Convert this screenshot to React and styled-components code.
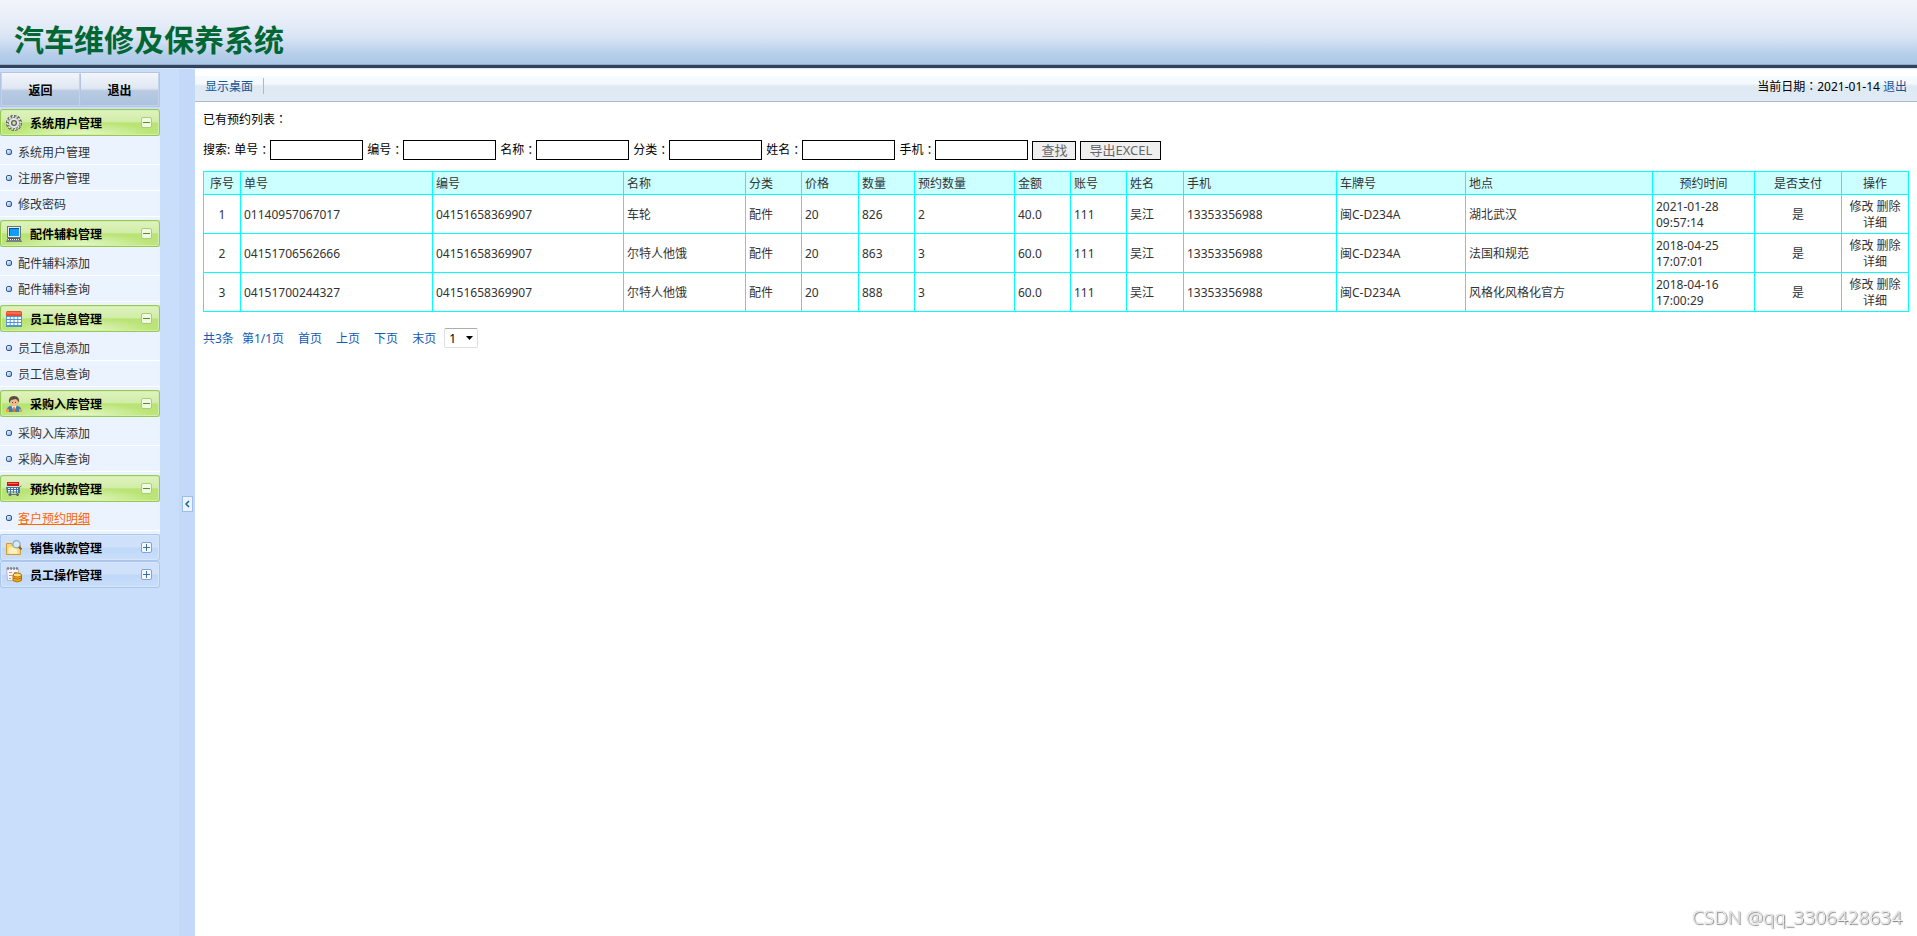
import React, { useState } from 'react';
import styled, { createGlobalStyle } from 'styled-components';

const GlobalStyle = createGlobalStyle`
  * {
    box-sizing: border-box;
  }

  body {
    margin: 0;
    background: #fff;
    color: #000;
    font: 12px/16px 'Noto Sans', 'Noto Sans CJK SC', sans-serif;
  }

  a {
    color: inherit;
    text-decoration: none;
  }
`;

const Page = styled.div`
  display: flex;
  flex-direction: column;
  min-height: 100vh;
`;

const Header = styled.header`
  height: 68px;
  padding: 16px 14px 0;
  background: linear-gradient(#f2f5fa 0%, #e4ebf7 40%, #d6e2f3 60%, #b4cdea 85%, #abc8e8 100%);
  border-bottom: 3px solid #30435f;
  box-shadow: inset 0 -1px 0 #98abc4;
`;

const Title = styled.h1`
  margin: 0;
  color: #006633;
  font: bold 30px/44px 'Noto Sans CJK SC', sans-serif;
`;

const Body = styled.div`
  flex: 1;
  display: flex;
  border-top: 1px solid #d8e6f8;
`;

const Sidebar = styled.nav`
  width: 179px;
  padding-top: 3px;
  padding-right: 19px;
  background: #c9defa;
`;

const TopButtons = styled.div`
  display: grid;
  grid-template-columns: 1fr 1fr;
  height: 35px;
  margin-bottom: 2px;
  border: 1px solid #b4c5e3;
`;

const TopButton = styled.button`
  padding: 2px 0 0;
  border: 1px solid #c3d2e9;
  border-top-color: #f3f6fb;
  background: linear-gradient(#f1f4fa 0%, #dfe7f2 46%, #b9cbe3 54%, #adc2df 100%);
  color: #000;
  font: inherit;
  font-weight: bold;

  & + & {
    border-left-color: #b4c5e3;
  }
`;

const GroupHeader = styled.button`
  display: flex;
  align-items: center;
  gap: 8px;
  width: 100%;
  height: 27px;
  padding: 0 7px 0 5px;
  border: 1px solid ${props => (props.$open ? '#96cb50' : '#abc7ec')};
  border-radius: 3px;
  background: ${props => (props.$open
    ? 'radial-gradient(ellipse 45% 55% at 50% 100%, #e6f8cc 0%, rgba(230, 248, 204, 0) 100%), linear-gradient(#dff2bf 0%, #d2eda8 46%, #b9e373 52%, #bde67c 100%)'
    : 'linear-gradient(#cfe1fa 0%, #d0e2fb 48%, #bfd8f8 52%, #c9defb 100%)')};
  color: #000;
  font: inherit;
  font-weight: bold;
  text-align: left;
  box-shadow: inset 0 0 0 1px ${props => (props.$open ? '#d2eeaa' : '#d7e6fb')};

  svg {
    flex-shrink: 0;
  }
`;

const GroupTitle = styled.span`
  flex: 1;
  padding-top: 2px;
`;

const Items = styled.ul`
  margin: 0;
  padding: 3px 0;
  list-style: none;
  background: #eaf3ff;
`;

const Item = styled.li`
  display: flex;
  align-items: center;
  gap: 6px;
  height: 26px;
  padding-left: 6px;
  border-bottom: 1px solid #fff;
  color: ${props => (props.$active ? '#ff6600' : '#333')};

  a {
    padding-top: 2px;
    text-decoration: ${props => (props.$active ? 'underline' : 'none')};
  }
`;

const Bullet = styled.span`
  width: 6px;
  height: 6px;
  border: 1px solid #39588a;
  border-radius: 2px;
  background: linear-gradient(135deg, #fff, #6fa8ea);
`;

const Splitter = styled.div`
  width: 16px;
  display: flex;
  align-items: center;
  justify-content: center;
  padding-top: 2px;
  background: #c3d9f9;
`;

const Collapse = styled.button`
  display: flex;
  align-items: center;
  justify-content: center;
  width: 11px;
  height: 16px;
  padding: 0;
  border: 1px solid #9fbfe8;
  background: #eaf3ff;
`;

const Main = styled.main`
  flex: 1;
  min-width: 0;
`;

const TopBar = styled.div`
  display: flex;
  align-items: center;
  justify-content: space-between;
  height: 33px;
  padding: 2px 10px 0;
  background: linear-gradient(#fff 0 7px, #f5fbff 7px, #f3f9fe 15px, #e6edf4 16px, #dfe9f4 18px, #e1ebf5 100%);
  border-bottom: 1px solid #a9bac8;
`;

const DesktopLink = styled.a`
  padding: 2px 10px 0 0;
  border-right: 1px solid #a9bac8;
  color: #15559a;
  line-height: 14px;
`;

const LogoutLink = styled.a`
  color: #15559a;
`;

const Content = styled.div`
  padding: 9px 8px 8px;
`;

const Caption = styled.p`
  margin: 0;
`;

const Search = styled.form`
  display: flex;
  align-items: center;
  flex-wrap: wrap;
  gap: 4px;
  margin: 12px 0 11px;
`;

const Field = styled.label`
  display: flex;
  align-items: center;
`;

const TextBox = styled.input`
  width: 93px;
  height: 20px;
  padding: 1px 2px;
  border: 1px solid #000;
  background: #fff;
  font: inherit;
`;

const Button = styled.button`
  height: 19px;
  padding: 0 8px;
  border: 1px solid #000;
  background: #efefef;
  color: #666;
  font: inherit;
  font-size: 13px;
  line-height: 17px;
`;

// full-width colon with its dots in the middle of the em box
const ColonMark = styled.span`
  font-family: 'Noto Sans CJK TC', sans-serif;
`;

const Table = styled.table`
  width: 100%;
  table-layout: fixed;
  border-collapse: collapse;
  color: #333;

  th,
  td {
    border: 1px solid #00ffff;
    padding: 4px 3px 2px;
    font-weight: normal;
  }
`;

const Col = styled.col`
  width: ${props => props.$w}px;
`;

const HeadRow = styled.tr`
  background: #ccffff;
`;

const Th = styled.th`
  text-align: ${props => (props.$center ? 'center' : 'left')};
`;

const Td = styled.td`
  height: 39px;
  text-align: ${props => (props.$center ? 'center' : 'left')};
`;

const Pager = styled.div`
  display: flex;
  align-items: center;
  gap: 14px;
  margin-top: 16px;
  color: #1459b3;

  a,
  span {
    padding-top: 2px;
  }
`;

const PagerGroup = styled.div`
  display: flex;
  align-items: center;
  gap: 8px;
`;

const PageSelect = styled.div`
  display: grid;
  align-items: center;
  width: 34px;
  height: 20px;

  select,
  svg {
    grid-area: 1 / 1;
  }

  select {
    height: 20px;
    padding: 1px 4px 0;
    appearance: none;
    border: 1px solid #dcdfe6;
    border-top-color: #abadb3;
    border-radius: 2px;
    background: #fff;
    color: #000;
    font: inherit;
  }

  svg {
    justify-self: end;
    margin-right: 5px;
    pointer-events: none;
  }
`;

const Watermark = styled.div`
  position: fixed;
  right: 15px;
  bottom: 8px;
  color: #f4f4f4;
  font: 300 19px/22px 'Open Sans', 'Noto Sans', sans-serif;
  text-shadow: 1px 1px 1px #777, 0 0 1px #888;
`;

const Colon = () => <ColonMark>：</ColonMark>;

const GearIcon = () => (
  <svg width="16" height="16" viewBox="0 0 16 16">
    <circle cx="8" cy="8" r="6.9" fill="none" stroke="#5c5c60" strokeWidth="2.2" strokeDasharray="2.4 1.2" />
    <circle cx="8" cy="8" r="5.6" fill="#e6e6e8" stroke="#6c6c70" />
    <circle cx="8" cy="8" r="6.2" fill="none" stroke="#ededf0" strokeWidth="1.6" strokeDasharray="1.4 1.85" strokeDashoffset="-.5" />
    <circle cx="8" cy="8" r="2.4" fill="#cbe89c" stroke="#5f5f64" strokeWidth="1.3" />
  </svg>
);

const ComputerIcon = () => (
  <svg width="16" height="16" viewBox="0 0 16 16">
    <rect x="1.5" y=".5" width="13" height="11" fill="#e8ecee" stroke="#66757e" />
    <rect x="3" y="2" width="10" height="8" fill="#119cf5" />
    <path d="M3 2h10v1H3zM3 2h1v8H3z" fill="#0751a2" />
    <path d="M2 12h12l2 4H0z" fill="#4e5d66" />
    <path d="M2 13.5h12M1.5 15h13" stroke="#f1f3f4" strokeDasharray="1 1" />
  </svg>
);

const CalendarIcon = () => (
  <svg width="16" height="16" viewBox="0 0 17 16" preserveAspectRatio="none">
    <path d="M0 5h17v11H0z" fill="#4f94d4" />
    <path d="M0 1.5Q0 0 1.5 0h14Q17 0 17 1.5V5H0z" fill="#ed4a32" />
    <path d="M1 2h15" stroke="#ff8f78" />
    {[6, 9, 12].map(y => (
      <path key={y} d={`M1 ${y + 1}h3M5 ${y + 1}h3M9 ${y + 1}h3M13 ${y + 1}h3`} stroke="#fff" strokeWidth="2" />
    ))}
  </svg>
);

const PersonIcon = () => (
  <svg width="16" height="16" viewBox="0 0 16 16">
    <path d="M1 16v-3q0-2 3-3l4-1 4 1q3 1 3 3v3z" fill="#3d7fb3" />
    <path d="M5.5 10h5L8 16z" fill="#f3f6f8" />
    <path d="M7.3 11h1.4l.8 5h-3z" fill="#e8742a" />
    <ellipse cx="8" cy="6" rx="4" ry="4.5" fill="#f0b98a" />
    <path d="M3 7Q2 0 8 0t5 7l-1-2-2-2-5 1-1 2z" fill="#5c4a3c" />
    <circle cx="6.5" cy="6.5" r=".6" fill="#333" />
    <circle cx="9.5" cy="6.5" r=".6" fill="#333" />
    <path d="M0 13h3v3H0zM13 13h3v3h-3z" fill="#ef9b4f" />
  </svg>
);

const CartIcon = () => (
  <svg width="16" height="16" viewBox="0 0 16 16">
    <rect x="1" y="1" width="12" height="4" fill="#d40f18" />
    <path d="M2 2.500h10" stroke="#f26a6a" />
    <path d="M0 6h14l-1 6H1z" fill="#3e74ab" />
    <path d="M2 7.500h10M2 9.500h10M2 11h10" stroke="#fff" strokeDasharray="2 1" />
    <path d="M13.500 12V6l2-1M3 13.500h10" stroke="#667380" fill="none" />
    <circle cx="4" cy="13.500" r="1.500" fill="#666" />
    <circle cx="11.500" cy="13.500" r="1.500" fill="#666" />
  </svg>
);

const FolderSearchIcon = () => (
  <svg width="16" height="16" viewBox="0 0 16 16">
    <path d="M.5 3.500h5l1 2h8v9H.5z" fill="#f9d877" stroke="#d29a31" />
    <path d="M2.500 7.500h8l1 6h-9z" fill="#fff2c1" />
    <circle cx="10.500" cy="4.200" r="3.600" fill="#d5eafc" stroke="#8fa8bf" strokeWidth="1.200" />
    <path d="M13 7l2.500 2.500" stroke="#7d6448" strokeWidth="2" />
  </svg>
);

const NotesIcon = () => (
  <svg width="16" height="16" viewBox="0 0 16 16">
    <path d="M.5 1.500h12v12H1.500z" fill="#f4f5f8" stroke="#b4b9c3" />
    <path d="M2 0v3M5 0v3M8 0v3M11 0v3" stroke="#555" />
    <path d="M3 5.500h3M3 8.500h3M3 11.500h2M8 5.500h3" stroke="#d88d7f" />
    <path d="M7 8v5.500q4 3 8.500 0V8z" fill="#f5ae1e" stroke="#b36b0a" />
    <ellipse cx="11.250" cy="8" rx="4.250" ry="2" fill="#ffe173" stroke="#b36b0a" />
    <path d="M7 11q4 2.500 8.500 0" fill="none" stroke="#b36b0a" />
  </svg>
);

const ToggleIcon = ({ open }) => (
  <svg width="12" height="12" viewBox="0 0 12 12">
    <rect x="1.5" y=".5" width="10" height="10" rx="1.5" fill={open ? '#f0fae0' : '#f5f9ff'} stroke={open ? '#a6cf74' : '#7fa5d3'} />
    <path d={open ? 'M3 5.5h7' : 'M3 5.5h7M6.5 2v7'} stroke={open ? '#5a8a2c' : '#3b6ea8'} />
  </svg>
);

const menu = [
  { title: '系统用户管理', Icon: GearIcon, open: true, items: ['系统用户管理', '注册客户管理', '修改密码'] },
  { title: '配件辅料管理', Icon: ComputerIcon, open: true, items: ['配件辅料添加', '配件辅料查询'] },
  { title: '员工信息管理', Icon: CalendarIcon, open: true, items: ['员工信息添加', '员工信息查询'] },
  { title: '采购入库管理', Icon: PersonIcon, open: true, items: ['采购入库添加', '采购入库查询'] },
  { title: '预约付款管理', Icon: CartIcon, open: true, items: ['客户预约明细'] },
  { title: '销售收款管理', Icon: FolderSearchIcon, open: false, items: [] },
  { title: '员工操作管理', Icon: NotesIcon, open: false, items: [] },
];

const fields = ['单号', '编号', '名称', '分类', '姓名', '手机'];

const columns = [
  { label: '序号', width: 37, center: true },
  { label: '单号', width: 192 },
  { label: '编号', width: 191 },
  { label: '名称', width: 122 },
  { label: '分类', width: 56 },
  { label: '价格', width: 57 },
  { label: '数量', width: 56 },
  { label: '预约数量', width: 100 },
  { label: '金额', width: 56 },
  { label: '账号', width: 56 },
  { label: '姓名', width: 57 },
  { label: '手机', width: 153 },
  { label: '车牌号', width: 129 },
  { label: '地点', width: 187 },
  { label: '预约时间', width: 102, center: true },
  { label: '是否支付', width: 87, center: true },
  { label: '操作', width: 67, center: true },
];

const rows = [
  ['01140957067017', '04151658369907', '车轮', '配件', '20', '826', '2', '40.0', '111', '吴江', '13353356988', '闽C-D234A', '湖北武汉', ['2021-01-28', '09:57:14']],
  ['04151706562666', '04151658369907', '尔特人他饿', '配件', '20', '863', '3', '60.0', '111', '吴江', '13353356988', '闽C-D234A', '法国和规范', ['2018-04-25', '17:07:01']],
  ['04151700244327', '04151658369907', '尔特人他饿', '配件', '20', '888', '3', '60.0', '111', '吴江', '13353356988', '闽C-D234A', '风格化风格化官方', ['2018-04-16', '17:00:29']],
];

const MenuGroup = ({ group, active }) => {
  const [open, setOpen] = useState(group.open);
  const { Icon } = group;
  return (
    <div>
      <GroupHeader type="button" $open={open} onClick={() => setOpen(!open)}>
        <Icon />
        <GroupTitle>{group.title}</GroupTitle>
        <ToggleIcon open={open} />
      </GroupHeader>
      {open && group.items.length > 0 && (
        <Items>
          {group.items.map(name => (
            <Item key={name} $active={name === active}>
              <Bullet />
              <a href="#">{name}</a>
            </Item>
          ))}
        </Items>
      )}
    </div>
  );
};

const BookingTable = () => (
  <Table>
    <colgroup>
      {columns.map(c => <Col key={c.label} $w={c.width} />)}
    </colgroup>
    <thead>
      <HeadRow>
        {columns.map(c => <Th key={c.label} scope="col" $center={c.center}>{c.label}</Th>)}
      </HeadRow>
    </thead>
    <tbody>
      {rows.map((row, i) => (
        <tr key={row[0]}>
          <Td $center>{i + 1}</Td>
          {row.map((cell, j) => (
            <Td key={j}>
              {Array.isArray(cell) ? <>{cell[0]}<br />{cell[1]}</> : cell}
            </Td>
          ))}
          <Td $center>是</Td>
          <Td $center>
            <a href="#">修改</a> <a href="#">删除</a><br /><a href="#">详细</a>
          </Td>
        </tr>
      ))}
    </tbody>
  </Table>
);

const App = () => (
  <>
    <GlobalStyle />
    <Page>
      <Header>
        <Title>汽车维修及保养系统</Title>
      </Header>
      <Body>
        <Sidebar>
          <TopButtons>
            <TopButton type="button">返回</TopButton>
            <TopButton type="button">退出</TopButton>
          </TopButtons>
          {menu.map(group => (
            <MenuGroup key={group.title} group={group} active="客户预约明细" />
          ))}
        </Sidebar>
        <Splitter>
          <Collapse type="button" aria-label="收起">
            <svg width="5" height="8" viewBox="0 0 5 8">
              <path d="M4 1L1 4l3 3" fill="none" stroke="#1d5a9c" strokeWidth="1.500" />
            </svg>
          </Collapse>
        </Splitter>
        <Main>
          <TopBar>
            <DesktopLink href="#">显示桌面</DesktopLink>
            <span>
              当前日期<Colon />2021-01-14 <LogoutLink href="#">退出</LogoutLink>
            </span>
          </TopBar>
          <Content>
            <Caption>已有预约列表<Colon /></Caption>
            <Search onSubmit={e => e.preventDefault()}>
              <span>搜索:</span>
              {fields.map(name => (
                <Field key={name}>
                  {name}<Colon />
                  <TextBox type="text" name={name} />
                </Field>
              ))}
              <Button type="submit">查找</Button>
              <Button type="button">导出EXCEL</Button>
            </Search>
            <BookingTable />
            <Pager>
              <PagerGroup>
                <span>共3条</span>
                <span>第1/1页</span>
              </PagerGroup>
              <a href="#">首页</a>
              <a href="#">上页</a>
              <a href="#">下页</a>
              <PagerGroup>
                <a href="#">末页</a>
                <PageSelect>
                  <select aria-label="页码" defaultValue="1">
                    <option>1</option>
                  </select>
                  <svg width="7" height="4" viewBox="0 0 7 4">
                    <path d="M0 0h7L3.500 4z" fill="#000" />
                  </svg>
                </PageSelect>
              </PagerGroup>
            </Pager>
          </Content>
        </Main>
      </Body>
    </Page>
    <Watermark>CSDN @qq_3306428634</Watermark>
  </>
);

export default App;
